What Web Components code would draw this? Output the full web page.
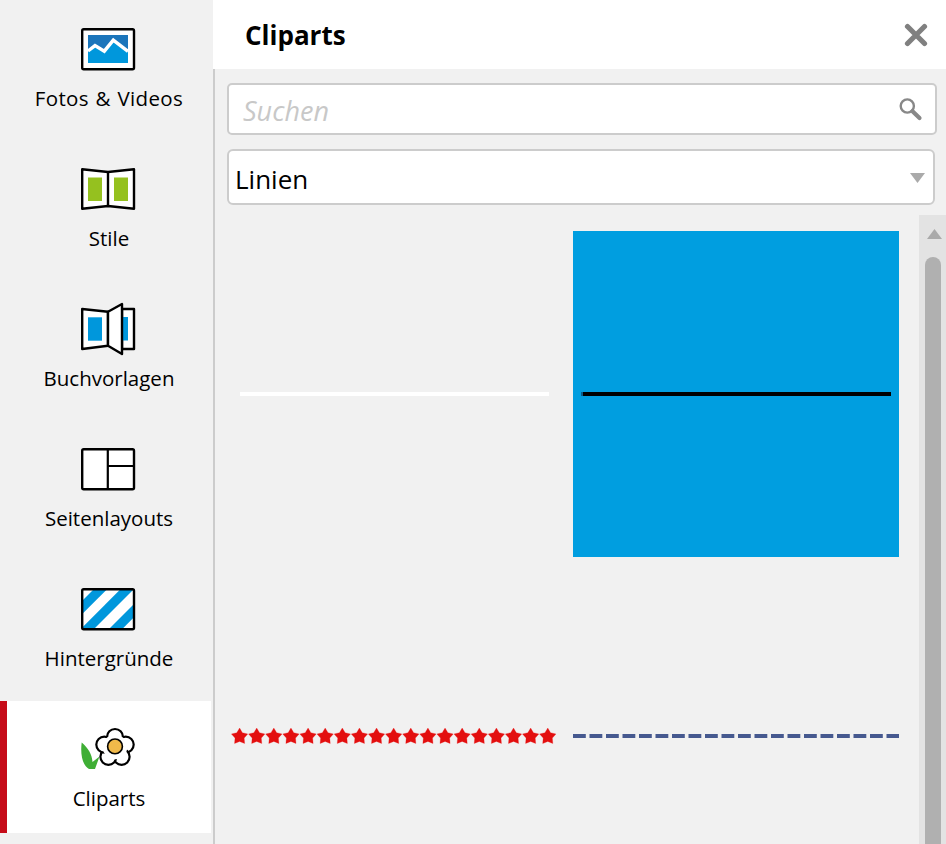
<!DOCTYPE html>
<html lang="de"><head><meta charset="utf-8"><title>Cliparts</title>
<style>
html,body{margin:0;padding:0;height:100%;overflow:hidden;background:#f1f1f1}
body{font-family:"Open Sans","Noto Sans","Liberation Sans",sans-serif;color:#000}
</style></head>
<body>
<app-shell>
  <side-nav slot="nav">
    <nav-item label="Fotos &amp; Videos" icon="photo" wide></nav-item>
    <nav-item label="Stile" icon="style"></nav-item>
    <nav-item label="Buchvorlagen" icon="book"></nav-item>
    <nav-item label="Seitenlayouts" icon="layout"></nav-item>
    <nav-item label="Hintergründe" icon="bg"></nav-item>
    <nav-item label="Cliparts" icon="flower" active></nav-item>
  </side-nav>
  <clipart-panel slot="main" heading="Cliparts">
    <search-box placeholder="Suchen"></search-box>
    <drop-select value="Linien"></drop-select>
    <clip-grid>
      <clip-cell kind="white"></clip-cell>
      <clip-cell kind="black" selected></clip-cell>
      <clip-cell kind="stars"></clip-cell>
      <clip-cell kind="dash"></clip-cell>
    </clip-grid>
  </clipart-panel>
</app-shell>
<script>
const ICONS={
photo:`<rect x="1.2" y="1.2" width="51.8" height="40" rx="1.5" fill="#fff" stroke="#000" stroke-width="2.4"/>
<rect x="7" y="7" width="40" height="28" fill="#1b75bb"/>
<path d="M7 24L14 18L23.3 24L32.3 12.7L47 24V35H7Z" fill="#0097dc"/>
<path d="M7 23L14 17.6L23.3 23.2L32.3 12.2L47 23.4" fill="none" stroke="#fff" stroke-width="3.4"/>`,
style:`<path d="M1.2 1.2L27 4L53 1.2V40.8L27 38L1.2 40.8Z" fill="#fff" stroke="#000" stroke-width="2.4" stroke-linejoin="round"/>
<path d="M27 4V38" stroke="#000" stroke-width="2.4"/>
<rect x="7" y="9.5" width="14" height="23.5" fill="#95c11f"/><rect x="33" y="9.5" width="14" height="23.5" fill="#95c11f"/>`,
book:`<g transform="translate(0 -5)"><path d="M41 6H53V46H41Z" fill="#fff" stroke="#000" stroke-width="2.4" stroke-linejoin="round"/>
<rect x="41" y="14" width="6" height="23.5" fill="#0097dc"/>
<path d="M1.2 6L27 8.7V42.7L1.2 46Z" fill="#fff" stroke="#000" stroke-width="2.4" stroke-linejoin="round"/>
<rect x="7" y="14.3" width="14" height="23.4" fill="#0097dc"/>
<path d="M27 8.7L41 1V51L27 42.7Z" fill="#fff" stroke="#000" stroke-width="2.4" stroke-linejoin="round"/></g>`,
layout:`<rect x="1.2" y="1.2" width="51.8" height="40" rx="1.5" fill="#fff" stroke="#000" stroke-width="2.4"/>
<path d="M26.8 1V41.5M26.8 18H53" stroke="#000" stroke-width="2.2" fill="none"/>`,
bg:`<defs><clipPath id="c"><rect x="1" y="1" width="52" height="40.5"/></clipPath></defs>
<rect x="1" y="1" width="52" height="40.5" fill="#fff"/>
<g clip-path="url(#c)" fill="#0097dc"><path d="M14 0H27.3L-14.7 42H-28Z"/><path d="M40.7 0H54L12 42H-1.3Z"/><path d="M69 0H82.3L40.3 42H27Z"/></g>
<rect x="1.2" y="1.2" width="51.8" height="40" rx="1.5" fill="none" stroke="#000" stroke-width="2.4"/>`,
flower:`<path d="M.7 14.5C-1 27 2 38 8 41H14L18.5 28.5L11.5 34C11 26 7 20 .7 14.5Z" fill="#3fae35"/>
<g fill="#fff" stroke="#000" stroke-width="2.2"><circle cx="34" cy="9" r="8"/><circle cx="44.7" cy="16.6" r="8"/><circle cx="40.6" cy="28.8" r="8"/><circle cx="27.4" cy="28.8" r="8"/><circle cx="23.3" cy="16.6" r="8"/></g>
<circle cx="34" cy="19" r="12.3" fill="#fff"/>
<circle cx="34" cy="18.4" r="7.4" fill="#f0b94a" stroke="#000" stroke-width="1.6"/>`
};
function def(name,css,html){
  customElements.define(name,class extends HTMLElement{
    constructor(){super();this.attachShadow({mode:"open"})}
    connectedCallback(){
      const g=a=>this.getAttribute(a);
      this.shadowRoot.innerHTML=`<style>${css}</style>`+html(g,this);
    }
  });
}
def("app-shell",`:host{display:flex;width:946px;height:844px;overflow:hidden;background:#f1f1f1}`,
 ()=>`<slot name="nav"></slot><slot name="main"></slot>`);
def("side-nav",`:host{display:flex;flex-direction:column;gap:8px;width:213px;flex:none;padding-top:1px;box-sizing:border-box;height:844px;background:#f1f1f1}`,
 ()=>`<slot></slot>`);
def("nav-item",`:host{display:flex;flex-direction:column;align-items:center;box-sizing:border-box;width:211px;height:132px;padding:27px 0 0 7px;position:relative;color:#000}
:host([active]){background:#fff}
:host([active])::before{content:"";position:absolute;left:0;top:0;bottom:0;width:7px;background:#c60c19}
svg{display:block;width:56px;height:42px;overflow:visible;flex:none}
span{display:block;margin-top:13px;font-size:20.5px;line-height:30px;white-space:nowrap}
:host([wide]) span{letter-spacing:.35px;word-spacing:1px}`,
 g=>`<svg viewBox="0 0 56 42" aria-hidden="true">${ICONS[g("icon")]}</svg><span>${g("label").replace(/&/g,"&amp;")}</span>`);
def("clipart-panel",`:host{display:flex;flex-direction:column;width:733px;flex:none;height:844px}
header{display:flex;align-items:center;justify-content:space-between;height:69px;flex:none;background:#fff;padding:0 18px 0 32px;box-sizing:border-box}
h1{margin:2px 0 0;font-size:26px;font-weight:700;line-height:67px}
svg{display:block;width:24px;height:24px}
.body{flex:1;min-height:0;border-left:2px solid #ccc;background:#f1f1f1;display:flex;flex-direction:column}`,
 g=>`<header><h1>${g("heading")}</h1><svg viewBox="0 0 24 24"><path d="M3.5 3.5L20.5 20.5M20.5 3.5L3.5 20.5" stroke="#808080" stroke-width="5.2" stroke-linecap="round"/></svg></header><div class="body"><slot></slot></div>`);
def("search-box",`:host{display:flex;align-items:center;justify-content:space-between;box-sizing:border-box;width:710px;height:52px;margin:14px 0 0 12px;flex:none;background:#fff;border:2px solid #ccc;border-radius:5px;padding:0 12px 0 14px}
span{font-style:italic;font-size:27px;color:#c8c8c8;line-height:44px;margin-top:4px}
svg{display:block;width:26px;height:26px}`,
 g=>`<span>${g("placeholder")}</span><svg viewBox="0 0 26 26"><circle cx="10.3" cy="10" r="6.6" fill="none" stroke="#888" stroke-width="2.4"/><path d="M15.5 15.2L22.5 22" stroke="#888" stroke-width="4.2" stroke-linecap="round"/></svg>`);
def("drop-select",`:host{display:flex;align-items:center;justify-content:space-between;box-sizing:border-box;width:708px;height:56px;margin:14px 0 0 12px;flex:none;background:#fff;border:2px solid #ccc;border-radius:6px;padding:0 8px 0 6px}
span{font-size:26px;line-height:48px;color:#000;margin-top:3px}
svg{display:block;width:15px;height:10px;margin-top:2px}`,
 g=>`<span>${g("value")}</span><svg viewBox="0 0 15 10"><path d="M0 0H15L7.5 10Z" fill="#aaa"/></svg>`);
def("clip-grid",`:host{display:flex;flex:1;min-height:0;margin-top:10px;overflow:hidden}
.g{flex:1;display:grid;grid-template-columns:326px 326px;grid-auto-rows:326px;gap:16px;padding:16px;box-sizing:border-box;align-content:start}
.sb{width:27px;flex:none;background:#e3e3e3;display:flex;flex-direction:column;align-items:flex-start;padding:14px 0 0 6px;box-sizing:border-box}
.up{display:block;width:15px;height:10px;margin-left:1.5px}
.th{width:16px;flex:1;margin-top:18px;background:#b0b0b0;border-radius:8px 8px 0 0}`,
 ()=>`<div class="g"><slot></slot></div><div class="sb"><svg class="up" viewBox="0 0 15 10"><path d="M0 10H15L7.5 0Z" fill="#aaa"/></svg><div class="th"></div></div>`);
function star(cx,cy,R,r){let p=[];for(let i=0;i<10;i++){const a=-Math.PI/2+i*Math.PI/5,q=i%2?r:R;p.push((cx+q*Math.cos(a)).toFixed(2)+","+(cy+q*Math.sin(a)).toFixed(2))}return `<polygon points="${p.join(" ")}"/>`}
def("clip-cell",`:host{display:flex;align-items:center;justify-content:center;width:326px;height:326px;position:relative}
:host([selected]){background:#009ee0}
svg{display:block;width:326px;height:326px}`,
 g=>{const k=g("kind");let s="";
  if(k==="white")s=`<rect x="9" y="161" width="309" height="4" fill="#fff"/>`;
  if(k==="black")s=`<rect x="8" y="161" width="2" height="4" fill="#0a5d8c"/><rect x="10" y="161" width="308" height="4" fill="#000"/>`;
  if(k==="stars"){s=`<g fill="#e30f0f" stroke="#f29a9a" stroke-width=".7" paint-order="stroke">`;for(let i=0;i<19;i++)s+=star(8.6+i*17.12,163.6,8.6,4.8);s+="</g>"}
  if(k==="dash"){s=`<g fill="#46598f">`;for(let i=0;i<20;i++)s+=`<rect x="${(i*16.5).toFixed(2)}" y="161" width="12.8" height="4"/>`;s+="</g>"}
  return `<svg viewBox="0 0 326 326">${s}</svg>`});
</script>
</body></html>
